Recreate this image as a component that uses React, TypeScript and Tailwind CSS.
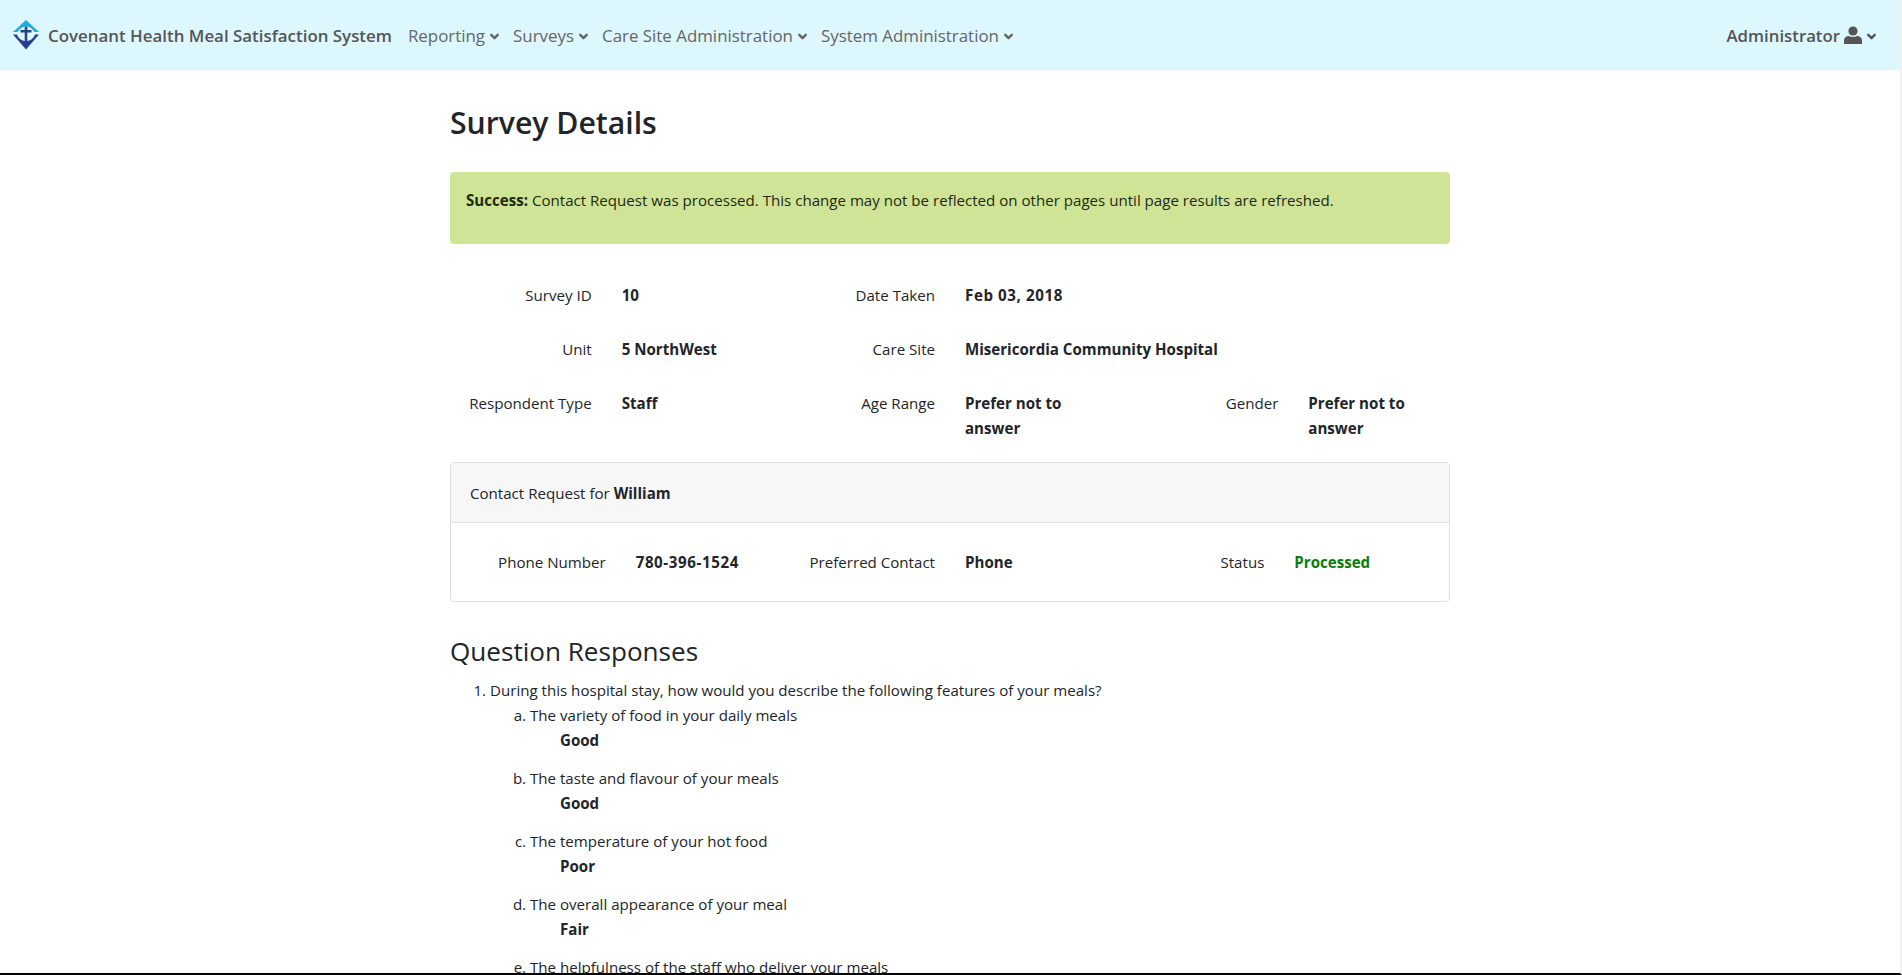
import { ChevronDown } from 'lucide-react'

const font = "font-['Open_Sans',sans-serif]"

function Caret() {
  return <ChevronDown size={13} strokeWidth={4.5} className="ml-[3px] mt-[3px] shrink-0" />
}

function Logo() {
  return (
    <svg width="26" height="30" viewBox="0 0 26 30" className="shrink-0">
      <path d="M13 0 L26 12 H21.5 C19.5 8.5 16.5 6.5 13 6.5 C9.5 6.5 6.5 8.5 4.5 12 H0 Z" fill="#1fa9dc" />
      <path d="M0 14.5 H4 C5.5 18.5 8.5 21 13 21 C17.5 21 20.5 18.5 22 14.5 H26 L13 29.5 Z" fill="#25408f" />
      <path d="M11.7 6.5 H14.3 V10 H18.5 V12.5 H14.3 V21 H11.7 V12.5 H7.5 V10 H11.7 Z" fill="#25408f" />
    </svg>
  )
}

function Field({ label, value, numeric }: { label: string; value: string; numeric?: boolean }) {
  return (
    <>
      <div className="px-[15px] text-right">{label}</div>
      <div className={`px-[15px] font-bold ${numeric ? 'tracking-[0.6px]' : ''}`}>{value}</div>
    </>
  )
}

const answers = [
  ['The variety of food in your daily meals', 'Good'],
  ['The taste and flavour of your meals', 'Good'],
  ['The temperature of your hot food', 'Poor'],
  ['The overall appearance of your meal', 'Fair'],
  ['The helpfulness of the staff who deliver your meals', 'Good'],
]

export default function App() {
  return (
    <div className={`${font} h-[975px] overflow-hidden border-r-2 border-b-2 border-r-[#f1f1f1] border-b-black bg-white text-[15.1px] leading-[25px] text-[#212529]`}>
      <nav className="flex h-[70px] items-center bg-[#ddf7ff] pl-[13px] pr-[22px]">
        <Logo />
        <span className="ml-[9px] text-[16.9px] font-semibold text-[#555]">Covenant Health Meal Satisfaction System</span>
        <ul className="ml-[16px] flex gap-[12px] text-[16.9px] text-[#666]">
          {['Reporting', 'Surveys', 'Care Site Administration', 'System Administration'].map((m) => (
            <li key={m} className="flex items-center">
              {m}
              <Caret />
            </li>
          ))}
        </ul>
        <div className="ml-auto flex items-center text-[16.8px] font-semibold text-[#555]">
          Administrator
          <svg width="18" height="18" viewBox="0 0 18 18" className="ml-[4px]" fill="#555">
            <circle cx="9" cy="5" r="4.6" />
            <path d="M0 18 V14.5 C0 11.5 2.5 10 5 10 C7 11.2 11 11.2 13 10 C15.5 10 18 11.5 18 14.5 V18 Z" />
          </svg>
          <Caret />
        </div>
      </nav>

      <main className="mx-auto w-[1000px]">
        <h1 className="mt-[33px] text-[30.2px] leading-[40px] font-semibold">Survey Details</h1>

        <div className="mt-[29px] h-[72px] rounded-[4px] bg-[#d0e498] px-[16px] pt-[16px] text-[#1f2a12]">
          <b>Success:</b> Contact Request was processed. This change may not be reflected on other pages until page results are refreshed.
        </div>

        <div className="-mx-[15px] mt-[39px] grid grid-cols-6 gap-y-[29px]">
          <Field label="Survey ID" value="10" />
          <Field label="Date Taken" value="Feb 03, 2018" numeric />
          <div className="col-span-2" />
          <Field label="Unit" value="5 NorthWest" />
          <div className="px-[15px] text-right">Care Site</div>
          <div className="col-span-3 px-[15px] font-bold">Misericordia Community Hospital</div>
          <Field label="Respondent Type" value="Staff" />
          <Field label="Age Range" value="Prefer not to answer" />
          <Field label="Gender" value="Prefer not to answer" />
        </div>

        <section className="mt-[21px] h-[140px] rounded-[4px] border border-[#dfdfdf]">
          <header className="flex h-[60px] items-center border-b border-[#dfdfdf] bg-[#f7f7f7] px-[19px] pt-px">
            <span>
              Contact Request for <b>William</b>
            </span>
          </header>
          <div className="px-[20px] pt-[27px]">
            <div className="-mx-[15px] grid grid-cols-6">
              <Field label="Phone Number" value="780-396-1524" numeric />
              <Field label="Preferred Contact" value="Phone" />
              <div className="px-[15px] text-right">Status</div>
              <div className="px-[15px] font-bold text-[#0a7d0a]">Processed</div>
            </div>
          </div>
        </section>

        <h2 className="mt-[31px] text-[26.1px] leading-[36px] font-normal">Question Responses</h2>

        <ol className="mt-[9px] list-decimal pl-[40px]">
          <li>
            During this hospital stay, how would you describe the following features of your meals?
            <ol className="list-[lower-alpha] pl-[40px]">
              {answers.map(([q, a]) => (
                <li key={q} className="mb-[13px]">
                  {q}
                  <div className="pl-[30px] font-bold">{a}</div>
                </li>
              ))}
            </ol>
          </li>
        </ol>
      </main>
    </div>
  )
}
